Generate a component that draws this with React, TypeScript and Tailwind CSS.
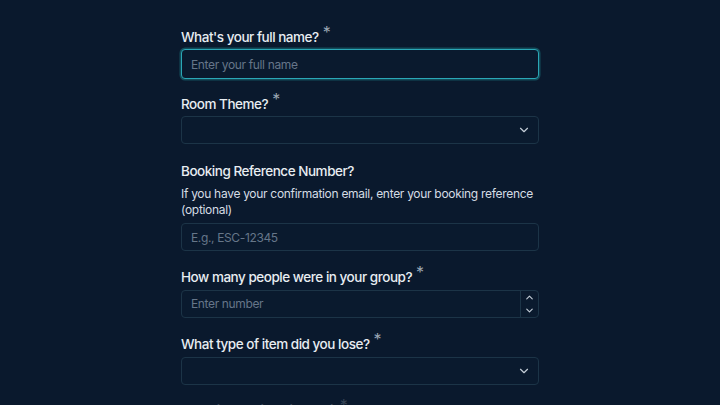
import React from 'react';
import { ChevronDown, ChevronUp } from 'lucide-react';

const Label = ({ text, required }: { text: string; required?: boolean }) => (
  <label className="block text-[13.5px] leading-5 font-medium tracking-[-0.035em] text-[#e8edf2]">
    {text}
    {required && <span className="ml-[4px] relative -top-[4px] text-[16px] font-normal text-[#9aa6b3]">*</span>}
  </label>
);

const inputBase =
  'w-full h-[28px] rounded-[4px] border border-[#1c3447] bg-[#0a1a2e] px-[9px] text-[12px] tracking-[-0.03em] text-[#e8edf2] placeholder:text-[#667689] outline-none';

const Select = () => (
  <div className="relative">
    <div className={inputBase} />
    <ChevronDown size={14} strokeWidth={2} className="absolute right-[8px] top-[7px] text-[#c3ccd6]" />
  </div>
);

export default function App() {
  const [count, setCount] = React.useState('');

  return (
    <div className="min-h-screen bg-[#0a192d]" style={{ fontFamily: 'Inter, "Noto Sans", sans-serif' }}>
      <form className="mx-auto w-[358px] pt-[26px] flex flex-col gap-[14px]">
        <div className="flex flex-col gap-[2px]">
          <Label text="What's your full name?" required />
          <input
            className="w-full h-[30px] rounded-[4px] border border-[#2aa7b6] bg-[#0a1a2e] px-[9px] text-[12px] tracking-[-0.03em] text-[#e8edf2] placeholder:text-[#667689] outline-none ring-[1.5px] ring-[#124c5a]"
            placeholder="Enter your full name"
          />
        </div>

        <div className="flex flex-col gap-[2px]">
          <Label text="Room Theme?" required />
          <Select />
        </div>

        <div className="flex flex-col mt-[3px]">
          <Label text="Booking Reference Number?" />
          <p className="mt-[5px] text-[12px] leading-4 tracking-[-0.025em] text-[#d5dce4]">
            If you have your confirmation email, enter your booking reference (optional)
          </p>
          <input className={`${inputBase} mt-[5px]`} placeholder="E.g., ESC-12345" />
        </div>

        <div className="flex flex-col gap-[3px] mt-[1px]">
          <Label text="How many people were in your group?" required />
          <div className="flex h-[28px] rounded-[4px] border border-[#1c3447] bg-[#0a1a2e]">
            <input
              className="flex-1 min-w-0 bg-transparent px-[9px] text-[12px] tracking-[-0.03em] text-[#e8edf2] placeholder:text-[#667689] outline-none"
              placeholder="Enter number"
              value={count}
              onChange={e => setCount(e.target.value)}
            />
            <div className="w-[18px] border-l border-[#1c3447] flex flex-col items-center justify-center gap-[2px] text-[#c3ccd6]">
              <ChevronUp size={11} strokeWidth={2.5} />
              <ChevronDown size={11} strokeWidth={2.5} />
            </div>
          </div>
        </div>

        <div className="flex flex-col gap-[3px] mt-[1px]">
          <Label text="What type of item did you lose?" required />
          <Select />
        </div>

        <div className="flex flex-col gap-[3px] opacity-30">
          <Label text="Describe the item in detail" required />
          <div className={inputBase} />
        </div>
      </form>
    </div>
  );
}
